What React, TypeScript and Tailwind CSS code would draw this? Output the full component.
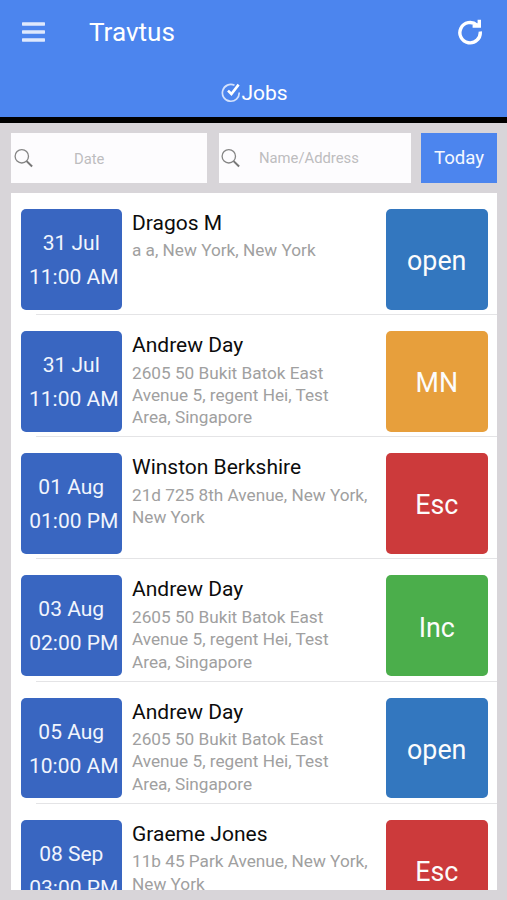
import { useState } from 'react';

interface Job {
  date: string;
  time: string;
  name: string;
  address: string[];
  status: string;
}

const statusColors: Record<string, string> = {
  open: 'bg-[#3377bf]',
  MN: 'bg-[#e79f3c]',
  Esc: 'bg-[#cc3a3b]',
  Inc: 'bg-[#4bae4b]',
};

const bukit = ['2605 50 Bukit Batok East', 'Avenue 5, regent Hei, Test', 'Area, Singapore'];

const jobs: Job[] = [
  { date: '31 Jul', time: '11:00 AM', name: 'Dragos M', address: ['a a, New York, New York'], status: 'open' },
  { date: '31 Jul', time: '11:00 AM', name: 'Andrew Day', address: bukit, status: 'MN' },
  { date: '01 Aug', time: '01:00 PM', name: 'Winston Berkshire', address: ['21d 725 8th Avenue, New York,', 'New York'], status: 'Esc' },
  { date: '03 Aug', time: '02:00 PM', name: 'Andrew Day', address: bukit, status: 'Inc' },
  { date: '05 Aug', time: '10:00 AM', name: 'Andrew Day', address: bukit, status: 'open' },
  { date: '08 Sep', time: '03:00 PM', name: 'Graeme Jones', address: ['11b 45 Park Avenue, New York,', 'New York'], status: 'Esc' },
];

function MenuIcon() {
  return (
    <svg width="23" height="20" viewBox="0 0 23 20" fill="#dfe9fd">
      <rect y="0.3" width="23" height="3.4" rx="0.6" />
      <rect y="8.3" width="23" height="3.4" rx="0.6" />
      <rect y="16.3" width="23" height="3.4" rx="0.6" />
    </svg>
  );
}

function RefreshIcon() {
  return (
    <svg width="26" height="26" viewBox="0 0 26 26" fill="none" stroke="#fff">
      <path d="M20 6.2A10.2 10.2 0 1 0 23.2 12.5" strokeWidth="3.4" />
      <path d="M24 0.8v8h-8.4V5.6h2.2l2.8-1.4v-3.4z" fill="#fff" stroke="none" />
    </svg>
  );
}

function CheckIcon() {
  return (
    <svg width="20" height="20" viewBox="0 0 20 20" fill="none">
      <path d="M13.5 2.3A8.4 8.4 0 1 0 18.2 9.5" stroke="#d3e1fc" strokeWidth="1.7" />
      <path d="M7 7.6l3.4 3.4L17.6 1.6" stroke="#fff" strokeWidth="2.6" />
    </svg>
  );
}

function SearchIcon() {
  return (
    <svg width="20" height="20" viewBox="0 0 20 20" fill="none" stroke="#858585" className="shrink-0">
      <circle cx="7.8" cy="8.3" r="6.7" strokeWidth="1.3" />
      <path d="M12.6 13.1l5.5 5.4" stroke="#777" strokeWidth="2" />
    </svg>
  );
}

function JobRow({ job }: { job: Job }) {
  return (
    <li className="flex h-[122.15px] flex-col">
      <div className="flex h-[121.15px] pt-4 pl-[9.5px] pr-[9.5px]">
        <div className="flex h-[100.5px] w-[101.5px] shrink-0 flex-col items-center rounded-[5px] bg-[#3966c1] pt-[17px] text-[21px] leading-[34px] whitespace-nowrap text-[#f1f5fd]">
          <span>{job.date}</span>
          <span className="pl-[5px]">{job.time}</span>
        </div>
        <div className="min-w-0 flex-1 pl-[10px] whitespace-nowrap">
          <h2 className="text-[21px] leading-[28.4px] text-[#0c0c0c]">{job.name}</h2>
          <p className="pt-[2px] text-[17.2px] leading-[22.4px] text-[#a0a0a0]">
            {job.address.map(line => (
              <span key={line} className="block">{line}</span>
            ))}
          </p>
        </div>
        <div className={`flex h-[100.5px] w-[101.5px] shrink-0 items-center justify-center rounded-[5px] pt-[4px] text-[26.8px] text-[#fcfcfc] ${statusColors[job.status]}`}>
          {job.status}
        </div>
      </div>
      <div className="ml-[25px] h-px bg-[#e4e4e6]" />
    </li>
  );
}

export default function App() {
  const [date, setDate] = useState('');
  const [query, setQuery] = useState('');

  return (
    <div className="flex h-[900px] w-[507px] flex-col overflow-hidden bg-[#d8d5d9] font-[Roboto,sans-serif]">
      {/* App bar */}
      <header className="h-[123px] shrink-0 border-b-[6px] border-black bg-[#4c85ee] text-white">
        <div className="flex h-16 items-center pr-[24px] pl-[22px]">
          <button aria-label="Menu"><MenuIcon /></button>
          <h1 className="flex-1 pt-px pl-[44px] text-[26.1px]">Travtus</h1>
          <button aria-label="Refresh"><RefreshIcon /></button>
        </div>
        <div className="flex h-[53px] items-center justify-center pt-[5px] pl-[2px] text-[21px]">
          <CheckIcon />
          <span className="pt-[2px]">Jobs</span>
        </div>
      </header>

      {/* Filters */}
      <div className="flex h-[60px] shrink-0 pt-[10px] pr-[10px] pl-[11px]">
        <label className="mr-3 flex h-[50px] w-[196px] items-center bg-[#fdfcfe] pl-[3px]">
          <SearchIcon />
          <input
            className="w-full min-w-0 pt-[2px] pl-[40px] text-[14.8px] outline-none placeholder:text-[#bdbdbf]"
            placeholder="Date"
            value={date}
            onChange={e => setDate(e.target.value)}
          />
        </label>
        <label className="mr-[10px] flex h-[50px] w-[192px] items-center bg-[#fdfcfe] pl-[2px]">
          <SearchIcon />
          <input
            className="w-full min-w-0 pt-px pl-[18px] text-[14.8px] outline-none placeholder:text-[#bdbdbf]"
            placeholder="Name/Address"
            value={query}
            onChange={e => setQuery(e.target.value)}
          />
        </label>
        <button className="h-[50px] flex-1 bg-[#4c85ee] pt-[2px] text-[18.6px] text-[#f4f8ff]">Today</button>
      </div>

      {/* Job list */}
      <ul className="mt-[10px] mr-[10px] mb-[10px] ml-[11px] min-h-0 flex-1 overflow-hidden bg-white">
        {jobs.map((job, i) => (
          <JobRow key={i} job={job} />
        ))}
      </ul>
    </div>
  );
}
